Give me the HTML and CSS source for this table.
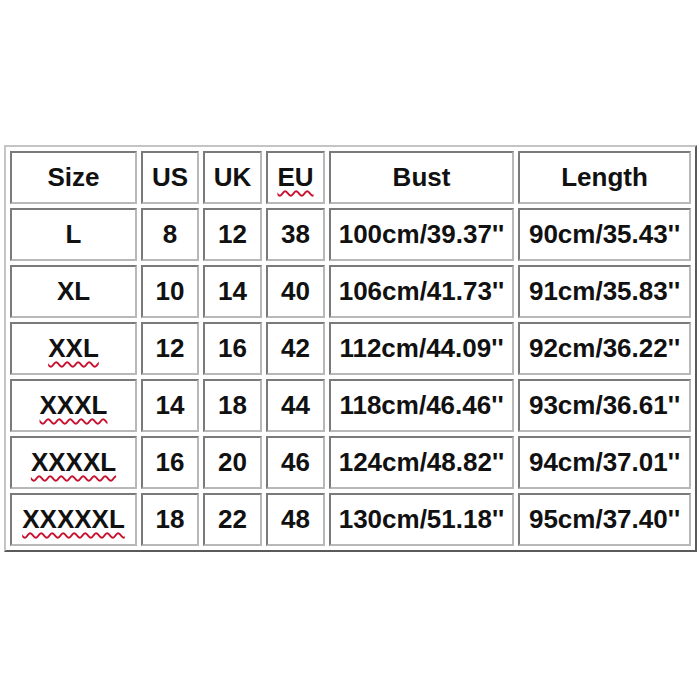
FILE: index.html
```html
<!DOCTYPE html>
<html>
<head>
<meta charset="utf-8">
<link rel="stylesheet" href="styles.css">
</head>
<body>
<div class="page">
<table class="size-table">
  <colgroup>
    <col class="c-size"><col class="c-us"><col class="c-uk"><col class="c-eu"><col class="c-bust"><col class="c-len">
  </colgroup>
  <tr><td>Size</td><td>US</td><td>UK</td><td><span class="sq">EU</span></td><td>Bust</td><td>Length</td></tr>
  <tr><td>L</td><td>8</td><td>12</td><td>38</td><td>100cm/39.37''</td><td>90cm/35.43''</td></tr>
  <tr><td>XL</td><td>10</td><td>14</td><td>40</td><td>106cm/41.73''</td><td>91cm/35.83''</td></tr>
  <tr><td><span class="sq">XXL</span></td><td>12</td><td>16</td><td>42</td><td>112cm/44.09''</td><td>92cm/36.22''</td></tr>
  <tr><td><span class="sq">XXXL</span></td><td>14</td><td>18</td><td>44</td><td>118cm/46.46''</td><td>93cm/36.61''</td></tr>
  <tr><td><span class="sq">XXXXL</span></td><td>16</td><td>20</td><td>46</td><td>124cm/48.82''</td><td>94cm/37.01''</td></tr>
  <tr><td><span class="sq">XXXXXL</span></td><td>18</td><td>22</td><td>48</td><td>130cm/51.18''</td><td>95cm/37.40''</td></tr>
</table>
</div>
</body>
</html>
```

FILE: styles.css
```css
html, body {
  margin: 0;
  padding: 0;
  background: #ffffff;
}
.page {
  width: 700px;
  height: 700px;
  padding: 145px 0 0 4px;
  box-sizing: border-box;
}
.size-table {
  width: 693px;
  table-layout: fixed;
  border-collapse: separate;
  border-spacing: 4px;
  border-style: solid;
  border-width: 2px;
  border-color: #c4c4c4 #5a5a5a #5a5a5a #c4c4c4;
  font-family: "Liberation Sans", Arial, sans-serif;
  font-weight: bold;
  font-size: 26px;
  color: #111111;
}
.c-size { width: 127px; }
.c-us { width: 58px; }
.c-uk { width: 59px; }
.c-eu { width: 59px; }
.c-bust { width: 185px; }
.c-len { width: 173px; }
.size-table td {
  box-sizing: border-box;
  height: 53px;
  padding: 0;
  text-align: center;
  vertical-align: middle;
  white-space: nowrap;
  border-style: solid;
  border-width: 2px;
  border-color: #7a7a7a #b8b8b8 #b8b8b8 #7a7a7a;
  background: #ffffff;
}
.sq {
  text-decoration-line: underline;
  text-decoration-style: wavy;
  text-decoration-color: #c8102e;
  text-decoration-thickness: 1.5px;
  text-underline-offset: 4px;
}
```
